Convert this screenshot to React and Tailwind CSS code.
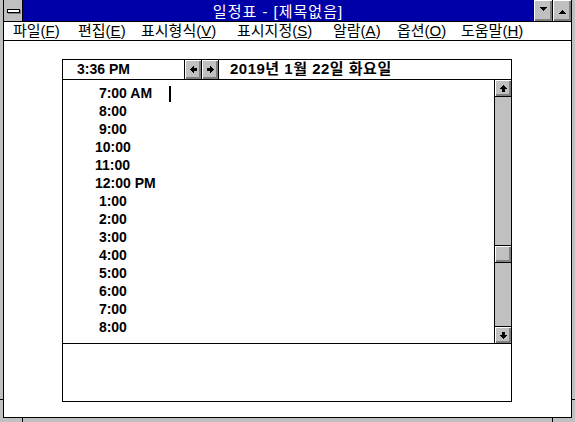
import React from 'react';

const ARROW = 'M3 0h1v1h1v1h1v1h1v1H5v3H2V4H0V3h1V2h1V1h1z';
const TRI_DOWN = 'M0 0h7v1H6v1H5v1H4v1H3V3H2V2H1V1H0z';

const bevel = 'bg-[#c0c0c0] shadow-[inset_1px_1px_0_#ffffff,inset_-1px_-1px_0_#808080,inset_-2px_-2px_0_#808080]';

function PixelIcon({ d, className = '' }) {
  return (
    <svg width="7" height="7" viewBox="0 0 7 7" className={className} shapeRendering="crispEdges">
      <path d={d} fill="#000" />
    </svg>
  );
}

function TitleButton({ up }) {
  return (
    <div className={`w-[19px] border-l border-black flex items-center justify-center ${bevel}`}>
      <PixelIcon d={TRI_DOWN} className={up ? 'rotate-180' : ''} />
    </div>
  );
}

const menus = [
  ['파일', 'F', 'w-[65px]'],
  ['편집', 'E', 'w-[63px]'],
  ['표시형식', 'V', 'w-[96px]'],
  ['표시지정', 'S', 'w-[96px]'],
  ['알람', 'A', 'w-[64px]'],
  ['옵션', 'O', 'w-[64px]'],
  ['도움말', 'H', 'w-[80px]'],
];

const hours = [
  ' 7:00 AM', ' 8:00', ' 9:00', '10:00', '11:00', '12:00 PM', ' 1:00',
  ' 2:00', ' 3:00', ' 4:00', ' 5:00', ' 6:00', ' 7:00', ' 8:00',
];

export default function App() {
  return (
    <div className="relative w-[575px] h-[422px] overflow-hidden bg-[#c0c0c0] font-['Liberation_Sans','Noto_Sans_CJK_KR',sans-serif] text-black">
      {/* frame corner ticks */}
      <div className="absolute left-[22px] top-[418px] w-px h-[4px] bg-black" />
      <div className="absolute left-[552px] top-[418px] w-px h-[4px] bg-black" />
      <div className="absolute left-0 top-[399px] w-[3px] h-px bg-black" />
      <div className="absolute right-0 top-[399px] w-[3px] h-px bg-black" />

      <div className="mx-[3px] h-[418px] border-x border-b border-black bg-white flex flex-col">
        {/* title bar */}
        <div className="flex h-[22px] shrink-0 border-b border-black">
          <div className="w-[19px] border-r border-black bg-[#c0c0c0] flex items-center justify-center">
            <div className="w-[13px] h-[4px] bg-white border border-black shadow-[1px_1px_0_#808080]" />
          </div>
          <div className="flex-1 bg-[#0000a8] text-white text-[15px] tracking-[1px] leading-none flex items-center justify-center pt-px">
            일정표 - [제목없음]
          </div>
          <TitleButton />
          <TitleButton up />
        </div>

        {/* menu bar */}
        <div className="flex h-[19px] shrink-0 border-b border-black pl-[9px] text-[15px] leading-[18px]">
          {menus.map(([label, key, w]) => (
            <span key={key} className={`${w} whitespace-nowrap`}>
              {label}(<span className="underline">{key}</span>)
            </span>
          ))}
        </div>

        {/* client area */}
        <div className="flex-1">
          <div className="mt-[18px] ml-[58px] w-[450px] h-[343px] border border-black flex flex-col">
            {/* header */}
            <div className="h-[20px] shrink-0 border-b border-black flex items-stretch">
              <div className="w-[121px] pl-[14px] text-[14px] font-bold flex items-center">3:36 PM</div>
              <div className={`w-[18px] border-x border-black flex items-center justify-center ${bevel}`}>
                <PixelIcon d={ARROW} className="-rotate-90" />
              </div>
              <div className={`w-[17px] border-r border-black flex items-center justify-center ${bevel}`}>
                <PixelIcon d={ARROW} className="rotate-90" />
              </div>
              <div className="pl-[11px] text-[15px] tracking-[0.5px] font-bold flex items-center whitespace-nowrap">
                2019년 1월 22일 화요일
              </div>
            </div>

            {/* day view */}
            <div className="h-[264px] shrink-0 border-b border-black flex">
              <div className="relative flex-1 pt-[4px] pl-[32px] text-[14px] font-bold">
                {hours.map((h, i) => (
                  <div key={i} className="h-[18px] leading-[18px] whitespace-pre">{h}</div>
                ))}
                <div className="absolute left-[106px] top-[6px] w-[2px] h-[16px] bg-black" />
              </div>
              <div className="w-[17px] border-l border-black bg-[#c0c0c0] flex flex-col">
                <div className={`h-[17px] border-b border-black flex items-center justify-center ${bevel}`}>
                  <PixelIcon d={ARROW} />
                </div>
                <div className="h-[148px]" />
                <div className={`h-[18px] border-y border-black ${bevel}`} />
                <div className="flex-1" />
                <div className={`h-[17px] border-t border-black flex items-center justify-center ${bevel}`}>
                  <PixelIcon d={ARROW} className="rotate-180" />
                </div>
              </div>
            </div>

            {/* notes */}
            <div className="flex-1" />
          </div>
        </div>
      </div>
    </div>
  );
}
